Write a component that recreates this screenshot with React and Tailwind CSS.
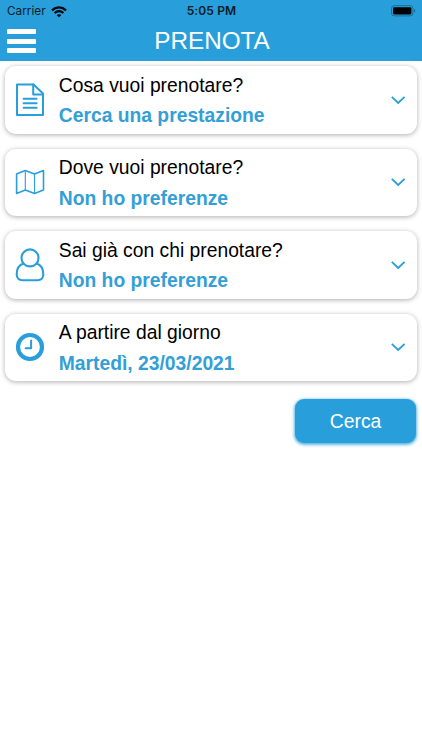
// App.jsx
const BLUE = '#289fdb';

function DocIcon() {
  return (
    <svg width="30" height="34" viewBox="0 0 30 34" fill="none" stroke={BLUE} strokeWidth="2" strokeLinejoin="round" strokeLinecap="round">
      <path d="M2 1.5H18.6L28 10.4V32.1H2Z" />
      <path d="M18.2 1.6V11.4H27.8" />
      <path d="M8.6 15.8H21.6M8.6 20.3H21.6M8.6 24.8H21.6" />
    </svg>
  );
}

function MapIcon() {
  return (
    <svg width="30" height="26" viewBox="0 0 30 26" fill="none" stroke={BLUE} strokeWidth="1.6" strokeLinejoin="round">
      <path d="M1.6 4.9L10.3 1.5L19.5 4.9L28.5 1.5V21L19.5 24.4L10.3 21L1.6 24.4Z" />
      <path d="M10.3 1.5V21M19.5 4.9V24.4" strokeWidth="1.1" />
    </svg>
  );
}

function UserIcon() {
  return (
    <svg width="30" height="34" viewBox="0 0 30 34" fill="none" stroke={BLUE} strokeWidth="2.1" strokeLinejoin="round">
      <circle cx="15" cy="9.9" r="8.5" />
      <path d="M8.6 15.4C4.2 16.6 1.7 21.2 1.7 26.6C1.7 30 4 32.2 7.4 32.2H22.6C26 32.2 28.3 30 28.3 26.6C28.3 21.2 25.8 16.6 21.4 15.4" />
    </svg>
  );
}

function ClockIcon() {
  return (
    <svg width="30" height="30" viewBox="0 0 30 30" fill="none" stroke={BLUE}>
      <circle cx="15" cy="15" r="12" strokeWidth="4.2" />
      <path d="M16.1 8.6V16.2H10.6" strokeWidth="2" strokeLinecap="round" strokeLinejoin="round" />
    </svg>
  );
}

const fields = [
  { icon: DocIcon, label: 'Cosa vuoi prenotare?', value: 'Cerca una prestazione' },
  { icon: MapIcon, label: 'Dove vuoi prenotare?', value: 'Non ho preferenze' },
  { icon: UserIcon, label: 'Sai già con chi prenotare?', value: 'Non ho preferenze' },
  { icon: ClockIcon, label: 'A partire dal giorno', value: 'Martedì, 23/03/2021' },
];

function FieldCard({ icon: Icon, label, value }) {
  return (
    <button className="flex h-[67.4px] w-full items-center rounded-[11px] bg-white pr-[11px] pl-[9.6px] text-left shadow-[0_1px_5px_rgba(0,0,0,0.32)]">
      <span className="flex w-[30px] shrink-0 justify-center">
        <Icon />
      </span>
      <span className="ml-[13.9px] flex-1 pt-[2.4px] text-[19.3px] leading-[30.4px] whitespace-nowrap">
        <span className="block text-black">{label}</span>
        <span className="block font-bold text-[#349fd6]">{value}</span>
      </span>
      <svg width="16" height="10" viewBox="0 0 16 10" fill="none" stroke={BLUE} strokeWidth="1.8">
        <path d="M1.8 1.8L8.2 8L14.6 1.8" />
      </svg>
    </button>
  );
}

function StatusBar() {
  return (
    <div className="grid h-[21px] grid-cols-3 items-center pr-[6px] pl-[7px] pt-px font-['Inter',sans-serif] text-[11.8px] text-[#0b1c28]">
      <div className="flex items-center gap-[5px] pt-px">
        <span>Carrier</span>
        <svg width="16" height="12" viewBox="0 0 16 12" fill="none" stroke="#03080c" strokeWidth="2.3">
          <path d="M1 4.3C5 0.5 11 0.5 15 4.3" />
          <path d="M3.6 7C6.2 4.6 9.8 4.6 12.4 7" />
          <path d="M8 11.5L5.7 9.1C7 7.9 9 7.9 10.3 9.1Z" fill="#03080c" stroke="none" />
        </svg>
      </div>
      <span className="text-center text-[12px] font-semibold tracking-[0.15px]">5:05 PM</span>
      <svg className="justify-self-end" width="25" height="12" viewBox="0 0 25 12">
        <rect x="0.5" y="0.7" width="21.4" height="10.2" rx="2.8" fill="none" stroke="#1b6b94" />
        <rect x="2" y="2.2" width="18.4" height="7.2" rx="1.4" fill="#000" />
        <path d="M23.2 4V7.8C24.6 7.2 24.6 4.6 23.2 4Z" fill="#1b5f83" />
      </svg>
    </div>
  );
}

export default function App() {
  return (
    <div className="min-h-screen bg-white font-['Liberation_Sans',Arial,sans-serif]">
      <header className="h-[61.3px] bg-[#289fdb]">
        <StatusBar />
        <div className="grid h-10 grid-cols-[61px_1fr_59px] items-center">
          {/* Menu */}
          <button className="ml-[7px] flex w-[28.5px] flex-col gap-[4.4px]">
            <span className="h-[5px] rounded-[1px] bg-white" />
            <span className="h-[5px] rounded-[1px] bg-white" />
            <span className="h-[5px] rounded-[1px] bg-white" />
          </button>
          <h1 className="text-center text-[24.3px] leading-none text-white">PRENOTA</h1>
        </div>
      </header>

      <main className="flex flex-col gap-[15.1px] px-[5.3px] pt-[5px]">
        {fields.map((f) => (
          <FieldCard key={f.label} {...f} />
        ))}
        <button className="mt-[3.2px] mr-[0.9px] h-[43.5px] w-[120.5px] self-end rounded-[9px] bg-[#289fdb] pt-[2px] text-[19.3px] text-white shadow-[0_1px_3px_1px_rgba(40,159,219,0.75)]">
          Cerca
        </button>
      </main>
    </div>
  );
}
